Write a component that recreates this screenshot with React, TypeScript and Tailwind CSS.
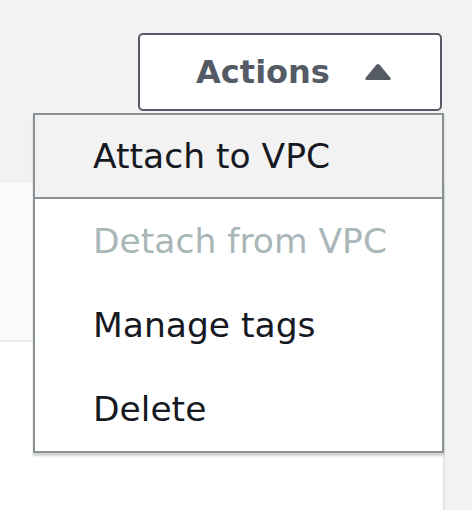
const items = [
  { label: "Attach to VPC", disabled: false, active: true },
  { label: "Detach from VPC", disabled: true, active: false },
  { label: "Manage tags", disabled: false, active: false },
  { label: "Delete", disabled: false, active: false },
];

export default function App() {
  return (
    <div
      className="relative h-[510px] w-[472px] overflow-hidden bg-[#f2f2f2]"
      style={{ fontFamily: '"DejaVu Sans", "Noto Sans", sans-serif' }}
    >
      <div className="flex h-[183px] justify-end pt-[33px] pr-[30px]">
        <button className="flex h-[78px] w-[304px] items-center justify-center gap-[34px] rounded-[5px] border-2 border-[#545b64] bg-white pl-[8px]">
          <span className="text-[32px] font-bold leading-none text-[#545b64]">Actions</span>
          <svg width="28" height="18" viewBox="0 0 28 18">
            <path d="M12 2.2 Q14 -0.2 16 2.2 L26.5 15 Q27.5 17 25 17 L3 17 Q0.5 17 1.5 15 Z" fill="#545b64" />
          </svg>
        </button>
      </div>
      <div className="h-[327px] w-[445px] border-r-2 border-[#e4e6e6] bg-white">
        <div className="h-[159px] border-b-2 border-[#eaeded] bg-[#fafafa]" />
      </div>

      <div className="absolute left-[33px] top-[113px] w-[411px] border-2 border-[#879196] bg-white shadow-[0_3px_2px_rgba(0,0,0,0.18)]">
        {items.map((it) => (
          <div
            key={it.label}
            className={
              it.active
                ? "flex h-[84px] items-center border-b-2 border-[#879196] bg-[#f2f2f2] pl-[58px]"
                : "flex h-[84px] items-center pl-[58px]"
            }
          >
            <span
              className={
                it.disabled
                  ? "text-[34.5px] leading-none text-[#aab7b8]"
                  : "text-[34.5px] leading-none text-[#16191f]"
              }
            >
              {it.label}
            </span>
          </div>
        ))}
      </div>
    </div>
  );
}
